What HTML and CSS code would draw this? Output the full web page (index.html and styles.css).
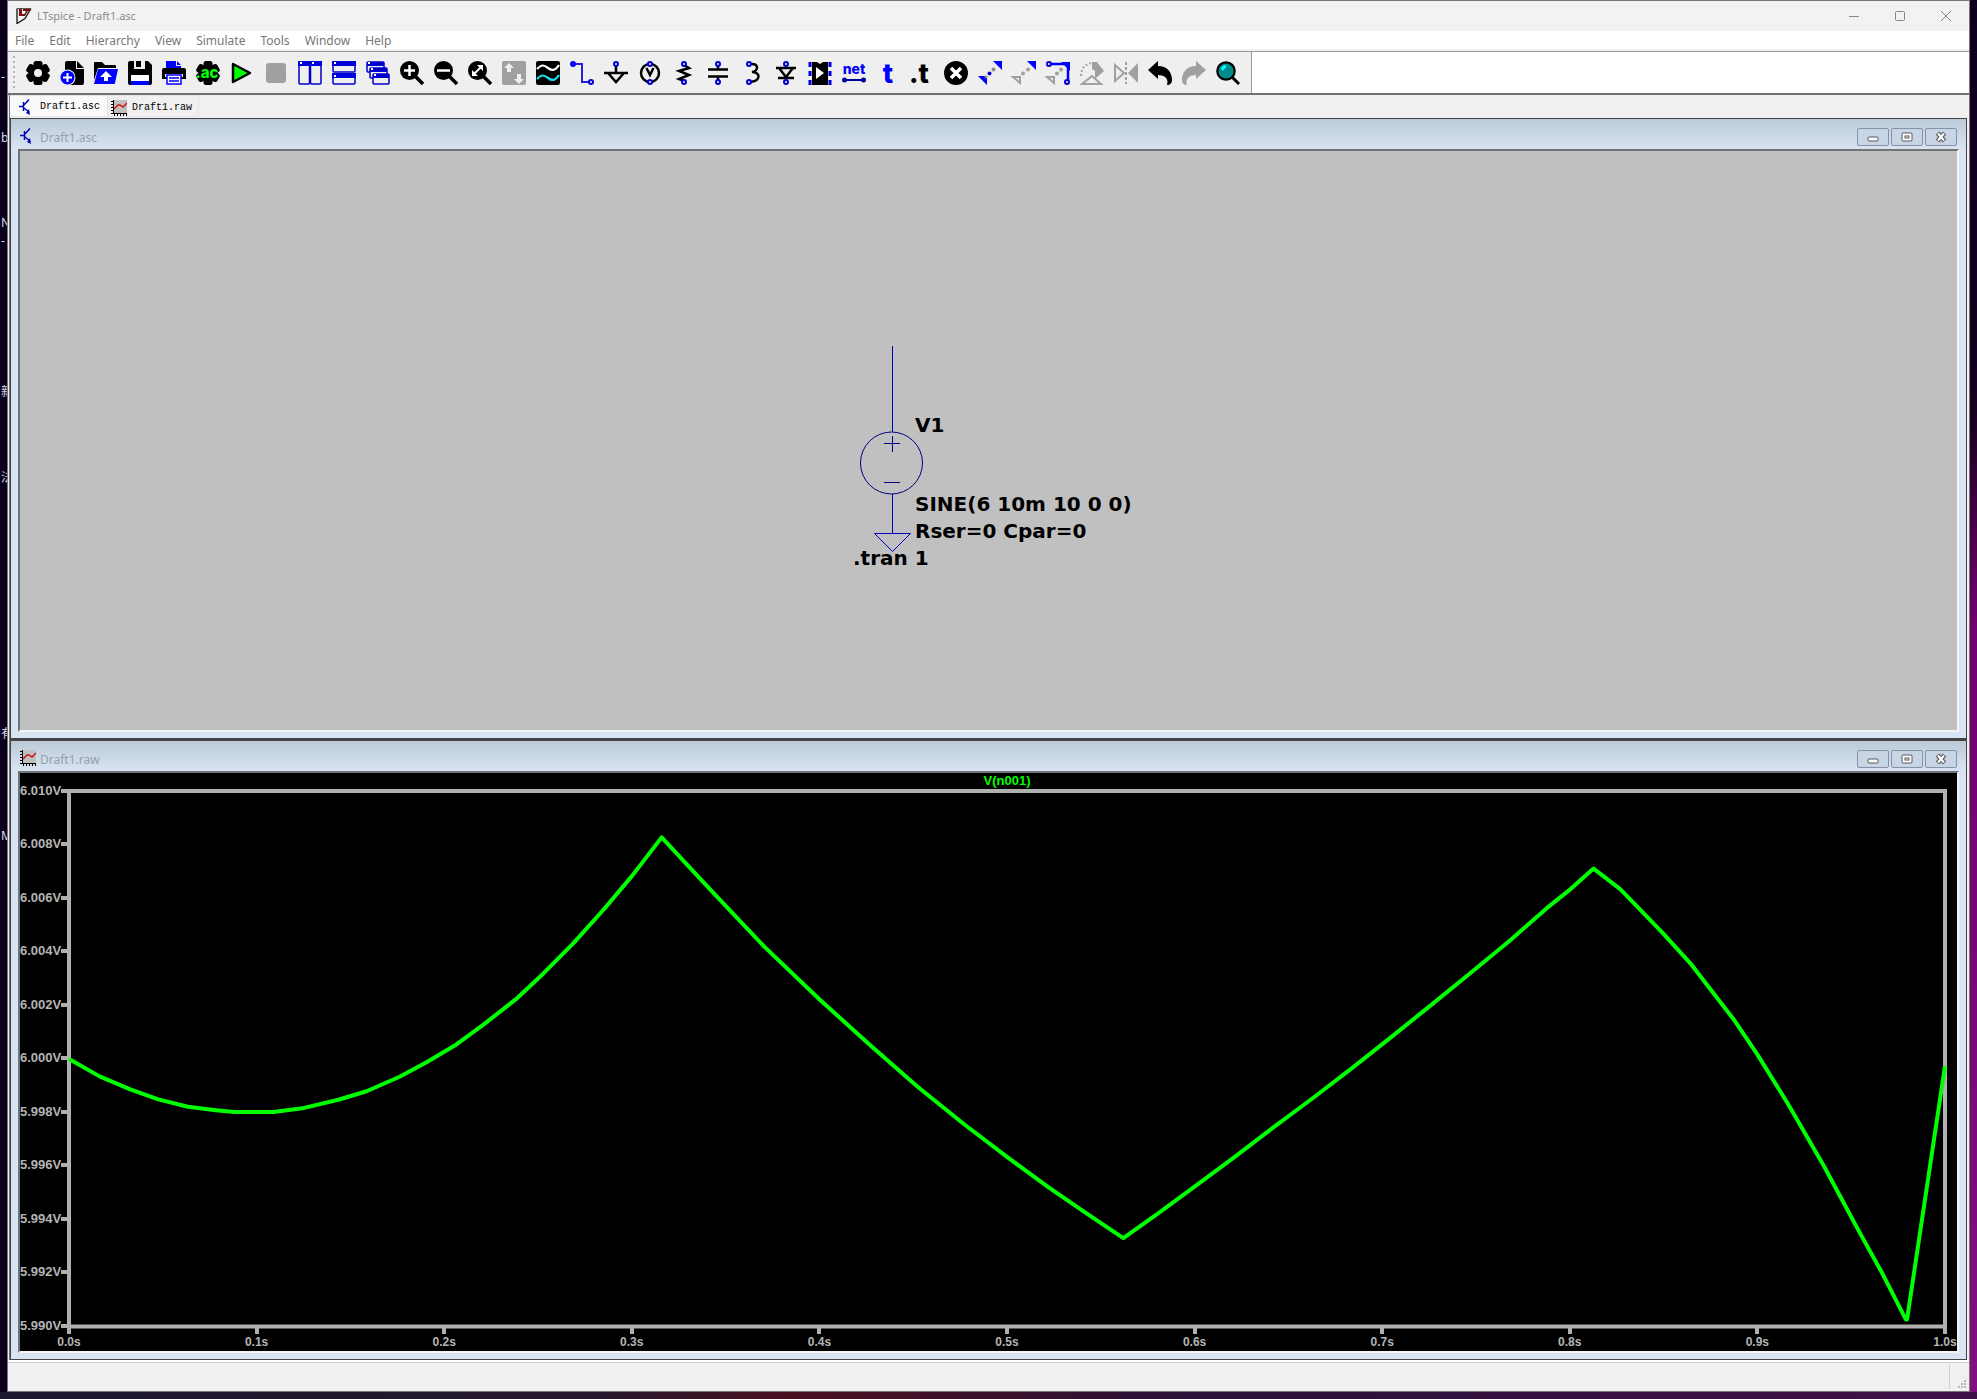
FILE: index.html
```html
<!DOCTYPE html>
<html lang="en">
<head>
<meta charset="utf-8">
<title>LTspice - Draft1.asc</title>
<link rel="stylesheet" href="styles.css">
</head>
<body>
<svg class="symbols" aria-hidden="true">
  <symbol id="transistor" viewBox="0 0 16 16">
    <path d="M0 7.500h4M4.500 3v9M5 6l5-5.500" fill="none" stroke="#0000c0" stroke-width="1.500"/>
    <path d="M5 9l5 4" fill="none" stroke="#0000c0" stroke-width="1.500"/>
    <path d="M7 14l3-4 1 6z" fill="#0000c0"/>
  </symbol>
  <symbol id="waveform" viewBox="0 0 16 16">
    <path d="M2 0h14v14H2z" fill="#c0c0c0"/>
    <path d="M2.500 0v14M2 13.500h14M0 1.500h2M0 4.500h2M0 7.500h2M0 10.500h2M0 13.500h2M3.500 14v2M6.500 14v2M9.500 14v2M12.500 14v2M15.500 14v2" stroke="#000" fill="none"/>
    <path d="M3 9l4-4 2 0 3 2 4-4" fill="none" stroke="#d01010" stroke-width="1.500"/>
  </symbol>
  <symbol id="min" viewBox="0 0 12 12"><rect x="1" y="6" width="10" height="4" rx="1" fill="#fff" stroke="#55585f"/></symbol>
  <symbol id="max" viewBox="0 0 12 12"><rect x="1" y="2" width="10" height="8" rx="1" fill="#fff" stroke="#55585f"/><rect x="4" y="5" width="4" height="2" fill="#fff" stroke="#55585f"/></symbol>
  <symbol id="close" viewBox="0 0 12 12"><path d="M2.500 2l7 8M9.500 2l-7 8" stroke="#55585f" stroke-width="4.500"/><path d="M3 2.500l6 7M9 2.500l-6 7" stroke="#fff" stroke-width="2.200"/></symbol>
</svg>

<div class="desktop-labels" aria-hidden="true">
  <span style="top:69px">-</span>
  <span style="top:130px">b</span>
  <span style="top:215px">N</span>
  <span style="top:233px">-</span>
  <span style="top:384px">新</span>
  <span style="top:470px">法</span>
  <span style="top:726px">有</span>
  <span style="top:828px">M</span>
</div>

<main class="app">
  <header class="titlebar">
    <svg class="logo" viewBox="0 0 16 16"><path d="M1 .500v15l8-5 6-10" fill="none" stroke="#111" stroke-width="1.300"/><path d="M1 .500h14" stroke="#555"/><path d="M3 1h3v5h3v2H3zM7 1h8l-1 2h-2l-3 5-1-1 2-4H7z" fill="#7a0c14"/></svg>
    <h1>LTspice - Draft1.asc</h1>
    <div class="window-buttons">
      <button aria-label="Minimize"><svg viewBox="0 0 12 12"><path d="M1 6.500h10"/></svg></button>
      <button aria-label="Maximize"><svg viewBox="0 0 12 12"><rect x="1.500" y="1.500" width="9" height="9" rx="1"/></svg></button>
      <button aria-label="Close"><svg viewBox="0 0 12 12"><path d="M1 1l10 10M11 1L1 11"/></svg></button>
    </div>
  </header>

  <nav class="menubar">
    <button>File</button><button>Edit</button><button>Hierarchy</button><button>View</button><button>Simulate</button><button>Tools</button><button>Window</button><button>Help</button>
  </nav>

  <div class="rebar">
    <div class="toolbar" role="toolbar">
      <i class="grip"></i>
      <button aria-label="Settings"><svg viewBox="0 0 24 24"><g><rect x="7.500" width="9" height="24" rx="2.500"/><rect x="7.500" width="9" height="24" rx="2.500" transform="rotate(60 12 12)"/><rect x="7.500" width="9" height="24" rx="2.500" transform="rotate(120 12 12)"/></g><circle cx="12" cy="12" r="4" fill="#efefef"/></svg></button>
      <button aria-label="New"><svg viewBox="0 0 24 24"><path d="M5 2q0-2 2-2h9v8h8v14q0 2-2 2H5z"/><path d="M17 0l7 7h-7z"/><circle cx="7.500" cy="16.500" r="8" fill="#efefef"/><circle cx="7.500" cy="16.500" r="7" fill="#00f"/><path d="M7.500 12v9M3 16.500h9" stroke="#fff" stroke-width="2"/></svg></button>
      <button aria-label="Open"><svg viewBox="0 0 24 24"><path d="M0 2q0-1 1-1h7l3 3h10q1 0 1 1v2H4L0 19z"/><path d="M4 8h20l-3 14q0 1-1 1H0z" fill="#00f"/><path d="M12 10l6 6h-4v4h-4v-4H6z" fill="#fff"/></svg></button>
      <button aria-label="Save"><svg viewBox="0 0 24 24"><path d="M0 2q0-2 2-2h18l4 4v18q0 2-2 2H2q-2 0-2-2z"/><path d="M6 0h11v8H6z" fill="#efefef"/><path d="M8 0h5v6H8z"/><path d="M3 14h18v6H3z" fill="#fff"/><path d="M3 20h18v4H3z" fill="#00f"/></svg></button>
      <button aria-label="Print"><svg viewBox="0 0 24 24"><path d="M4 0h10v5h5v3H4zM15 0l4 4h-4z" fill="#00f"/><path d="M0 9q0-2 2-2h20q2 0 2 2v9H0z"/><path d="M3 13h18v3H3z" fill="#efefef"/><path d="M5 14h14v9H5z" fill="#fff" stroke="#00f" stroke-width="1.500"/><path d="M7 17h10M7 20h10" stroke="#00f" stroke-width="1.500"/></svg></button>
      <button aria-label="Edit simulation"><svg viewBox="0 0 24 24"><rect x="7.500" width="9" height="24" rx="2.500"/><rect x="7.500" width="9" height="24" rx="2.500" transform="rotate(60 12 12)"/><rect x="7.500" width="9" height="24" rx="2.500" transform="rotate(120 12 12)"/><text x="11" y="17" font-size="15" fill="#0f0" text-anchor="middle">.ac</text></svg></button>
      <button aria-label="Run"><svg viewBox="0 0 24 24"><path d="M3 3l17 9L3 21z" fill="#0f0" stroke="#000" stroke-width="2.500" stroke-linejoin="round"/></svg></button>
      <button aria-label="Stop" disabled><svg viewBox="0 0 24 24"><rect x="2" y="2" width="20" height="20" rx="3" fill="#a0a0a0"/></svg></button>
      <button aria-label="Tile vertically"><svg viewBox="0 0 24 24"><g fill="#efefef" stroke="#00c" stroke-width="1.500"><rect x="1" y="1" width="10.500" height="22" rx="1"/><rect x="12.500" y="1" width="10.500" height="22" rx="1"/></g><path d="M0 0h24v5H0z" fill="#00d"/><path d="M2 1h2v2H2zM14 1h2v2h-2z" fill="#fff"/></svg></button>
      <button aria-label="Tile horizontally"><svg viewBox="0 0 24 24"><g fill="#efefef" stroke="#00c" stroke-width="1.500"><rect x="1" y="1" width="22" height="10" rx="1"/><rect x="1" y="13" width="22" height="10" rx="1"/></g><path d="M0 0h24v5H0zM0 12h24v5H0z" fill="#00d"/><path d="M2 1h2v2H2zM2 14h2v2H2z" fill="#fff"/></svg></button>
      <button aria-label="Cascade"><svg viewBox="0 0 24 24"><g fill="#efefef" stroke="#00c" stroke-width="1.500"><rect x="1" y="1" width="17" height="10" rx="1"/><path d="M1 3h17" stroke-width="4"/><rect x="4" y="7" width="17" height="10" rx="1"/><path d="M4 9h17" stroke-width="4"/><rect x="7" y="13" width="16" height="10" rx="1"/><path d="M7 15h16" stroke-width="4"/></g><path d="M2 1h2v2H2zM5 7h2v2H5zM8 13h2v2H8z" fill="#fff"/></svg></button>
      <button aria-label="Zoom in"><svg viewBox="0 0 24 24"><circle cx="9.500" cy="9.500" r="9.500"/><path d="M15 15l8 8" stroke="#000" stroke-width="3.500"/><path d="M9.500 4v11M4 9.500h11" stroke="#fff" stroke-width="2.500"/></svg></button>
      <button aria-label="Zoom out"><svg viewBox="0 0 24 24"><circle cx="9.500" cy="9.500" r="9.500"/><path d="M15 15l8 8" stroke="#000" stroke-width="3.500"/><path d="M3 9.500h13" stroke="#fff" stroke-width="2.500"/></svg></button>
      <button aria-label="Zoom to fit"><svg viewBox="0 0 24 24"><circle cx="9.500" cy="9.500" r="9.500"/><path d="M15 15l8 8" stroke="#000" stroke-width="3.500"/><path d="M6 13l7-7" stroke="#fff" stroke-width="2"/><path d="M9 4h6v6zM4 9v6h6z" fill="#fff"/></svg></button>
      <button aria-label="Autorange" disabled><svg viewBox="0 0 24 24"><rect width="24" height="24" rx="2" fill="#a0a0a0"/><path d="M7 2l5 5H9v4H5V7H2zM17 23l-5-5h3v-5h4v5h3z" fill="#efefef"/></svg></button>
      <button aria-label="Plot settings"><svg viewBox="0 0 24 24"><rect width="24" height="24" rx="2"/><path d="M1 8c5-5 7-4 11-1s7 3 11-3" fill="none" stroke="#fff" stroke-width="2.200"/><path d="M1 18c5-5 7-4 11-1s7 3 11-3" fill="none" stroke="#1fe0f0" stroke-width="2.200"/></svg></button>
      <button aria-label="Wire"><svg viewBox="0 0 24 24"><path d="M3 3h9v18h8" fill="none" stroke="#22d" stroke-width="2"/><circle cx="3" cy="3" r="3" fill="#00f"/><circle class="pin" cx="21" cy="21" r="2"/></svg></button>
      <button aria-label="Ground"><svg viewBox="0 0 24 24"><path d="M12 4v8M0 12h24M4 12l8 9 8-9" class="ink"/><circle class="pin" cx="12" cy="3" r="2"/></svg></button>
      <button aria-label="Voltage source"><svg viewBox="0 0 24 24"><circle cx="12" cy="12" r="9" class="ink"/><path d="M8.500 7l3.500 7 3.500-7" class="ink"/><circle class="pin" cx="12" cy="3" r="2"/><circle class="pin" cx="12" cy="21" r="2"/></svg></button>
      <button aria-label="Resistor"><svg viewBox="0 0 24 24"><path d="M12 4l5 3-10 3 10 4-10 4 5 2" class="ink"/><circle class="pin" cx="12" cy="3" r="2"/><circle class="pin" cx="12" cy="21" r="2"/></svg></button>
      <button aria-label="Capacitor"><svg viewBox="0 0 24 24"><path d="M12 4v4M12 16v4M2 8.500h20M2 15.500h20" class="ink"/><circle class="pin" cx="12" cy="3" r="2"/><circle class="pin" cx="12" cy="21" r="2"/></svg></button>
      <button aria-label="Inductor"><svg viewBox="0 0 24 24"><path d="M10 3c9-1 9 7 2 8 9 0 9 9-2 10" class="ink"/><circle class="pin" cx="9" cy="3" r="2"/><circle class="pin" cx="9" cy="21" r="2"/></svg></button>
      <button aria-label="Diode"><svg viewBox="0 0 24 24"><path d="M2 7h20M5 7l7 9 7-9M4 17h16" class="ink"/><circle class="pin" cx="12" cy="3" r="2"/><circle class="pin" cx="12" cy="21" r="2"/></svg></button>
      <button aria-label="Component"><svg viewBox="0 0 24 24"><path d="M4 1h5l3 2 3-2h5v23H4z"/><path d="M8 6l8 6-8 6z" fill="#fff"/><path d="M2 1v23M22 1v23" stroke="#00d" stroke-width="3" stroke-dasharray="5 4"/></svg></button>
      <button aria-label="Net name"><svg viewBox="0 0 24 24"><text x="12" y="13" font-size="14" fill="#00f" text-anchor="middle">net</text><path d="M3 19h18" stroke="#0000a0" stroke-width="2"/><circle cx="2.500" cy="19" r="2.500" fill="#0000a0"/><circle cx="21.500" cy="19" r="2.500" fill="#0000a0"/></svg></button>
      <button aria-label="Text"><svg viewBox="0 0 24 24"><text x="12" y="22" font-size="27" fill="#00f" text-anchor="middle">t</text></svg></button>
      <button aria-label="SPICE directive"><svg viewBox="0 0 24 24"><text x="9" y="22" font-size="27" text-anchor="middle">.t</text></svg></button>
      <button aria-label="Delete"><svg viewBox="0 0 24 24"><circle cx="12" cy="12" r="12"/><path d="M7 7l10 10M17 7L7 17" stroke="#fff" stroke-width="3.500"/></svg></button>
      <button aria-label="Move"><svg viewBox="0 0 24 24"><path d="M15 0h9v9zM0 15h9v9z" fill="#00f"/><circle cx="11.500" cy="12.500" r="2" fill="#00c"/><circle cx="15.500" cy="8.500" r="2" fill="#889"/><circle cx="8" cy="16" r="1.500" fill="#889"/></svg></button>
      <button aria-label="Copy"><svg viewBox="0 0 24 24"><path d="M15 0h9v9z" fill="#00f"/><path d="M1 16h7v6z" class="dim"/><circle cx="11" cy="12.500" r="2" fill="#a0a0a0"/><circle cx="16" cy="8.500" r="2" fill="#a0a0a0"/></svg></button>
      <button aria-label="Drag"><svg viewBox="0 0 24 24"><path d="M15 1h9v9z" fill="#00f"/><path d="M4 3h18v17" fill="none" stroke="#00f" stroke-width="2.500"/><circle class="pin" cx="3" cy="3" r="2"/><circle class="pin" cx="21" cy="21" r="2"/><path d="M1 16h7v6z" class="dim"/><circle cx="11" cy="12.500" r="2" fill="#a0a0a0"/><circle cx="15" cy="8.500" r="2" fill="#a0a0a0"/></svg></button>
      <button aria-label="Rotate" disabled><svg viewBox="0 0 24 24"><path d="M12 1h5l7 9-9 8V10l-3-2z" fill="#a0a0a0"/><path d="M1 15c0-8 5-13 12-13" class="dim" stroke-dasharray="2 2"/><path d="M2 23h19l-9-8z" class="dim"/></svg></button>
      <button aria-label="Mirror" disabled><svg viewBox="0 0 24 24"><path d="M24 2v20l-10-10z" fill="#a0a0a0"/><path d="M1 4v16l9-8z" class="dim"/><path d="M12 1v22" class="dim" stroke-dasharray="3 2"/></svg></button>
      <button aria-label="Undo"><svg viewBox="0 0 24 24"><path d="M10 0v5c9 0 14 6 14 14 0 3-2 5-5 5 2-6-2-10-9-10v4L0 9z"/></svg></button>
      <button aria-label="Redo" disabled><svg viewBox="0 0 24 24"><path d="M14 0v5C5 5 0 11 0 19c0 3 2 5 5 5-2-6 2-10 9-10v4l10-9z" fill="#a0a0a0"/></svg></button>
      <button aria-label="Search"><svg viewBox="0 0 24 24"><path d="M16 16l7 7" stroke="#000" stroke-width="3"/><circle cx="10" cy="10" r="8.700" fill="#008a8a" stroke="#000" stroke-width="2.200"/><path d="M5 8q1-4 5-4v3q-2 0-3 3z" fill="#0ff"/></svg></button>
    </div>
  </div>

  <div class="mdi">
    <div class="tabs" role="tablist">
      <button class="tab active" role="tab"><svg><use href="#transistor"/></svg>Draft1.asc</button>
      <button class="tab" role="tab"><svg><use href="#waveform"/></svg>Draft1.raw</button>
    </div>

    <section class="child">
      <header class="caption">
        <svg><use href="#transistor"/></svg><h2>Draft1.asc</h2>
        <div class="child-buttons">
          <button aria-label="Minimize"><svg><use href="#min"/></svg></button><button aria-label="Restore"><svg><use href="#max"/></svg></button><button aria-label="Close"><svg><use href="#close"/></svg></button>
        </div>
      </header>
      <div class="client schematic">
        <svg class="circuit" viewBox="0 0 320 240">
          <g fill="none" stroke="#0000c0">
            <path d="M52.500 6v86M52.500 154v39M34.500 193.500h36l-18 18z"/>
          </g>
          <g fill="none" stroke="#000080">
            <circle cx="51.500" cy="123" r="31"/>
            <path d="M44 103.500h16M52.500 96v16M44 142.500h16"/>
          </g>
          <text x="75" y="92">V1</text>
          <text x="75" y="171">SINE(6 10m 10 0 0)</text>
          <text x="75" y="198">Rser=0 Cpar=0</text>
          <text x="13" y="225">.tran 1</text>
        </svg>
      </div>
    </section>

    <section class="child">
      <header class="caption">
        <svg><use href="#waveform"/></svg><h2>Draft1.raw</h2>
        <div class="child-buttons">
          <button aria-label="Minimize"><svg><use href="#min"/></svg></button><button aria-label="Restore"><svg><use href="#max"/></svg></button><button aria-label="Close"><svg><use href="#close"/></svg></button>
        </div>
      </header>
      <div class="client plot">
        <div class="trace">V(n001)</div>
        <ol class="y-axis">
          <li>6.010V</li><li>6.008V</li><li>6.006V</li><li>6.004V</li><li>6.002V</li><li>6.000V</li><li>5.998V</li><li>5.996V</li><li>5.994V</li><li>5.992V</li><li>5.990V</li>
        </ol>
        <div class="graph">
          <svg viewBox="0 0 1532 1443" preserveAspectRatio="none">
            <rect width="1532" height="1443" class="frame"/>
            <polyline class="curve" points="0,722 25,769 50,804 73,831 97,851 120,860 135,865 167,865 192,854 220,832 243,809 270,770 292,731 315,686 339,628 365,561 387,493 412,410 437,318 460,228 484,125 526,274 568,420 613,562 655,687 693,797 731,898 766,986 800,1068 830,1136 861,1205 890,1137 920,1064 952,986 983,908 1014,832 1048,746 1081,660 1113,575 1145,489 1177,402 1207,315 1226,265 1245,209 1267,265 1301,381 1325,468 1360,618 1379,711 1403,839 1433,1010 1460,1176 1481,1301 1500,1424 1501,1424 1532,741"/>
          </svg>
        </div>
        <ol class="x-axis">
          <li>0.0s</li><li>0.1s</li><li>0.2s</li><li>0.3s</li><li>0.4s</li><li>0.5s</li><li>0.6s</li><li>0.7s</li><li>0.8s</li><li>0.9s</li><li>1.0s</li>
        </ol>
      </div>
    </section>
  </div>

  <footer class="statusbar">
    <svg viewBox="0 0 9 9"><path d="M6 0h2v2H6zM3 3h2v2H3zM6 3h2v2H6zM0 6h2v2H0zM3 6h2v2H3zM6 6h2v2H6z" fill="#b8b8b8"/></svg>
  </footer>
</main>
</body>
</html>
```
FILE: styles.css
```css
* { box-sizing: border-box; }

body {
  margin: 0;
  height: 100vh;
  padding: 0 7px 7px;
  position: relative;
  overflow: hidden;
  font: 12px/16px "Noto Sans", "Noto Sans CJK SC", sans-serif;
  background:
    linear-gradient(#0c001c, #18001f 30%, #70006c 45%, #80107c) right top / 7px calc(100% - 7px) no-repeat,
    linear-gradient(90deg, #1c1830, #24182e 30%, #4a1020 40%, #2a1238 60%, #401048) left bottom / 100% 7px no-repeat,
    #0a001e;
}

h1, h2 { margin: 0; font-weight: 400; }
ol { margin: 0; padding: 0; list-style: none; }

button {
  margin: 0;
  padding: 0;
  border: 0;
  background: none;
  font: inherit;
  color: inherit;
}

.symbols { position: absolute; width: 0; height: 0; }

.desktop-labels span {
  position: absolute;
  left: 1px;
  color: #d8dce8;
}

.app {
  position: relative;
  height: 100%;
  display: flex;
  flex-direction: column;
  border: 1px solid #777;
  background: #f0f0f0;
}

/* Title bar and menu */
.titlebar {
  height: 30px;
  display: flex;
  align-items: center;
  padding-left: 8px;
  background: #f2f2f2;
  color: #8c8c8c;
}
.titlebar h1 { flex: 1; margin-left: 5px; font-size: 11px; }
.logo { width: 16px; height: 16px; }
.window-buttons { display: flex; }
.window-buttons button { width: 46px; height: 30px; display: grid; place-items: center; }
.window-buttons svg { width: 12px; height: 12px; fill: none; stroke: #888; }

.menubar {
  height: 20px;
  display: flex;
  gap: 1px;
  background: #fff;
  border-bottom: 2px solid #f0f0f0;
  color: #777;
}
.menubar button { padding: 0 7px; height: 18px; line-height: 20px; }

/* Toolbar */
.rebar {
  height: 44px;
  display: flex;
  background: #fff;
  border-top: 1px solid #999;
  border-bottom: 2px solid #707070;
}
.toolbar {
  display: flex;
  align-items: center;
  padding: 0 6px 0 5px;
  background: #efefef;
  border-right: 1px solid #999;
}
.toolbar button { width: 34px; height: 34px; display: grid; place-items: center; }
.toolbar svg { width: 24px; height: 24px; overflow: visible; }
.toolbar text { font-family: Inter, "Open Sans", sans-serif; font-weight: 800; }
.grip {
  width: 2px;
  height: 34px;
  margin-right: 6px;
  background: repeating-linear-gradient(#b4b4b4 0 2px, transparent 2px 5px);
}
.ink { fill: none; stroke: #000; stroke-width: 2.500; }
.dim { fill: none; stroke: #a0a0a0; stroke-width: 2; }
.pin { fill: #efefef; stroke: #0000d0; stroke-width: 2; }

/* Document area */
.mdi {
  flex: 1;
  min-height: 0;
  display: flex;
  flex-direction: column;
  margin-left: 1px;
  padding-right: 2px;
  border-left: 1px solid #777;
}
.tabs { height: 23px; display: flex; align-items: flex-start; }
.tab {
  height: 22px;
  display: flex;
  align-items: center;
  gap: 5px;
  padding: 3px 6px 0 3px;
  border: 1px solid #e4e4e4;
  border-left: 0;
  background: #f0f0f0;
  font: 10px/12px "Liberation Mono", monospace;
  color: #000;
}
.tab.active { padding: 1px 7px 0 9px; background: #fafafa; }
.tab svg, .caption > svg { width: 16px; height: 16px; }

.child {
  flex: 1;
  min-height: 0;
  display: flex;
  flex-direction: column;
  padding: 0 7px 6px;
  border: 1px solid #444;
  background: linear-gradient(#bccad8, #d8e4f1 30px);
}
.child + .child { border-top-width: 2px; }
.caption {
  height: 30px;
  flex: none;
  display: flex;
  align-items: flex-start;
  padding: 9px 2px 0 2px;
  color: #98a0a8;
}
.caption h2 { flex: 1; margin-left: 4px; font-size: 12px; line-height: 20px; }
.child-buttons { display: flex; gap: 2px; }
.child-buttons button {
  width: 32px;
  height: 18px;
  display: grid;
  place-items: center;
  border: 1px solid #8791ab;
  border-radius: 2px;
  background: #c8d5e5;
}
.child-buttons svg { width: 12px; height: 12px; }

.client {
  flex: 1;
  min-height: 0;
  border: 2px solid;
  border-color: #707478 #f4f4f4 #f4f4f4 #707478;
  overflow: hidden;
}
.schematic { position: relative; background: #c0c0c0; }
.circuit { position: absolute; left: 820px; top: 189px; width: 320px; height: 240px; }
.circuit text { font: bold 20px Tahoma, "DejaVu Sans", sans-serif; }

/* Waveform viewer */
.plot {
  display: grid;
  grid-template: 18px 1fr 25px / 49px 1fr 12px;
  background: #000;
  color: #b4b4b4;
  font: bold 12px/16px "Liberation Sans", sans-serif;
}
.trace { grid-area: 1 / 2; text-align: center; color: #0f0; font-size: 13px; }
.y-axis {
  grid-area: 2 / 1;
  display: flex;
  flex-direction: column;
  justify-content: space-between;
  font-size: 13px;
}
.y-axis li { height: 0; display: flex; align-items: center; justify-content: space-between; }
.y-axis li::after { content: ""; width: 8px; height: 4px; background: #b0b0b0; }
.graph { grid-area: 2 / 2; min-height: 0; }
.graph svg { display: block; width: 100%; height: 100%; overflow: visible; }
.frame, .curve { fill: none; stroke-width: 4px; vector-effect: non-scaling-stroke; }
.frame { stroke: #b0b0b0; }
.curve { stroke: #0f0; stroke-linejoin: round; }
.x-axis { grid-area: 3 / 2; display: flex; justify-content: space-between; }
.x-axis li { width: 0; display: flex; flex-direction: column; align-items: center; }
.x-axis li::before { content: ""; width: 4px; height: 8px; background: #b0b0b0; }

.statusbar {
  height: 31px;
  display: flex;
  justify-content: flex-end;
  align-items: flex-end;
  padding: 2px;
  border-top: 2px solid #fff;
  box-shadow: inset 0 1px #d0d0d0;
}
.statusbar svg { width: 9px; height: 9px; }
.statusbar::before { content: ""; width: 1px; height: 25px; margin-right: 8px; background: #d0d0d0; }
```
